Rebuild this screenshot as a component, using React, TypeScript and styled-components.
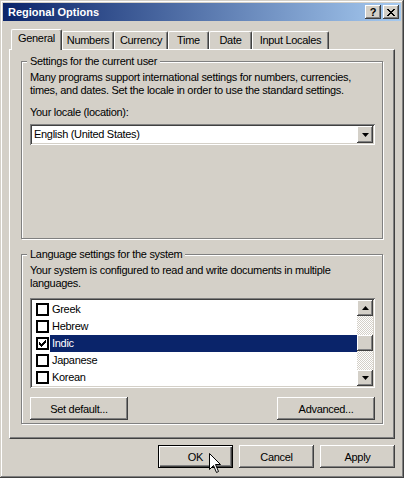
import React from "react";
import styled, { createGlobalStyle, css } from "styled-components";

const Global = createGlobalStyle`
  html, body { margin: 0; padding: 0; background: #d4d0c8; }
  body { font-family: "Liberation Sans", Arial, sans-serif; font-size: 11px; color: #000; letter-spacing: -0.3px; }
  *, *::before, *::after { box-sizing: border-box; }
`;

const raised = css`
  box-shadow: inset -1px -1px #404040, inset 1px 1px #ffffff, inset -2px -2px #808080, inset 2px 2px #d4d0c8;
`;
const sunken = css`
  box-shadow: inset 1px 1px #808080, inset -1px -1px #ffffff, inset 2px 2px #404040, inset -2px -2px #d4d0c8;
`;

const Window = styled.div`
  position: relative;
  width: 404px;
  height: 478px;
  padding: 3px;
  background: #d4d0c8;
  display: flex;
  flex-direction: column;
  box-shadow: inset -1px -1px #404040, inset 1px 1px #d4d0c8, inset -2px -2px #808080, inset 2px 2px #ffffff;
`;

const TitleBar = styled.div`
  flex: none;
  height: 18px;
  display: flex;
  align-items: center;
  padding: 0 2px 0 5px;
  background: linear-gradient(to right, #0a246a, #a6caf0);
`;

const TitleText = styled.div`
  flex: 1;
  color: #fff;
  font-weight: bold;
  font-size: 11px;
  line-height: 18px;
  letter-spacing: 0;
  white-space: nowrap;
`;

const CaptionButtons = styled.div`
  display: flex;
  gap: 2px;
`;

const CaptionButton = styled.div`
  width: 16px;
  height: 14px;
  background: #d4d0c8;
  ${raised}
  display: flex;
  align-items: center;
  justify-content: center;
  font-weight: bold;
  font-size: 11px;
  line-height: 14px;
  letter-spacing: 0;
  color: #000;
`;

const Body = styled.div`
  flex: 1;
  display: flex;
  flex-direction: column;
  padding: 8px 6px 7px;
`;

const TabStrip = styled.div`
  flex: none;
  height: 20px;
  display: flex;
  align-items: flex-end;
  padding-left: 2px;
`;

const Tab = styled.div<{ $w: number; $active?: boolean }>`
  position: relative;
  z-index: ${(p) => (p.$active ? 1 : 0)};
  flex: none;
  width: ${(p) => p.$w}px;
  height: ${(p) => (p.$active ? 21 : 18)}px;
  margin-bottom: ${(p) => (p.$active ? -1 : 0)}px;
  padding-top: 2px;
  background: #d4d0c8;
  border-top: 1px solid #fff;
  border-left: 1px solid #fff;
  border-right: 1px solid #404040;
  border-radius: 2px 2px 0 0;
  box-shadow: inset -1px 0 #808080;
  text-align: center;
  line-height: 13px;
  white-space: nowrap;
`;

const Panel = styled.div`
  flex: 1;
  display: flex;
  flex-direction: column;
  gap: 15px;
  padding: 11px 11px 0;
  background: #d4d0c8;
  border-top: 1px solid #fff;
  border-left: 1px solid #fff;
  border-right: 1px solid #404040;
  border-bottom: 1px solid #404040;
  box-shadow: inset -1px -1px #808080;
`;

const GroupBox = styled.div<{ $h: number }>`
  flex: none;
  height: ${(p) => p.$h}px;
  display: flex;
  flex-direction: column;
  padding: 0 7px 0 8px;
  border: 1px solid #808080;
  box-shadow: 1px 1px 0 #fff, inset 1px 1px 0 #fff;
`;

const GroupTitle = styled.div`
  align-self: flex-start;
  margin: -7px 0 0 -3px;
  padding: 0 3px;
  background: #d4d0c8;
  line-height: 13px;
  white-space: nowrap;
`;

const Text = styled.div<{ $mt: number }>`
  margin-top: ${(p) => p.$mt}px;
  line-height: 13px;
`;

const Combo = styled.div<{ $mt: number }>`
  margin-top: ${(p) => p.$mt}px;
  height: 21px;
  padding: 2px;
  display: flex;
  background: #fff;
  ${sunken}
`;

const ComboText = styled.div`
  flex: 1;
  padding-left: 2px;
  line-height: 17px;
`;

const ArrowButton = styled.div`
  flex: none;
  width: 16px;
  height: 16px;
  background: #d4d0c8;
  ${raised}
  display: flex;
  align-items: center;
  justify-content: center;
`;

const ComboButton = styled(ArrowButton)`
  height: 17px;
`;

const ListBox = styled.div<{ $mt: number }>`
  margin-top: ${(p) => p.$mt}px;
  height: 90px;
  padding: 2px;
  display: flex;
  background: #fff;
  ${sunken}
`;

const ListRows = styled.div`
  flex: 1;
  padding-top: 1px;
  display: flex;
  flex-direction: column;
  overflow: hidden;
`;

const Row = styled.div`
  flex: none;
  height: 17px;
  display: flex;
  align-items: center;
  padding-left: 4px;
`;

const CheckBox = styled.div`
  flex: none;
  width: 13px;
  height: 13px;
  border: 2px solid #000;
  background: #fff;
  display: flex;
  align-items: center;
  justify-content: center;
`;

const RowLabel = styled.div<{ $selected?: boolean }>`
  flex: 1;
  align-self: stretch;
  margin-left: 1px;
  padding-left: 2px;
  line-height: 17px;
  background: ${(p) => (p.$selected ? "#0a246a" : "transparent")};
  color: ${(p) => (p.$selected ? "#fff" : "#000")};
`;

const ScrollBar = styled.div`
  flex: none;
  width: 16px;
  display: flex;
  flex-direction: column;
  background: repeating-conic-gradient(#d4d0c8 0 25%, #ffffff 0 50%) 0 0 / 2px 2px;
`;

const Track = styled.div`
  flex: 1;
  display: flex;
  flex-direction: column;
`;

const Thumb = styled.div<{ $top: number }>`
  margin-top: ${(p) => p.$top}px;
  height: 16px;
  background: #d4d0c8;
  ${raised}
`;

const ButtonRow = styled.div<{ $mt: number }>`
  margin-top: ${(p) => p.$mt}px;
  display: flex;
  justify-content: space-between;
`;

const Footer = styled.div`
  flex: none;
  margin-top: 6px;
  display: flex;
  justify-content: flex-end;
  gap: 6px;
`;

const Button = styled.button<{ $w: number; $default?: boolean }>`
  width: ${(p) => p.$w}px;
  height: 23px;
  margin: 0;
  padding: 0;
  border: ${(p) => (p.$default ? "1px solid #000" : "none")};
  background: #d4d0c8;
  font: inherit;
  letter-spacing: inherit;
  color: #000;
  display: flex;
  align-items: center;
  justify-content: center;
  ${(p) =>
    p.$default
      ? css`box-shadow: inset 1px 1px #ffffff, inset -1px -1px #404040, inset -2px -2px #808080;`
      : raised}
`;

const Cursor = styled.svg`
  position: absolute;
  left: 209px;
  top: 453px;
`;

const DownArrow = () => (
  <svg width="7" height="4" viewBox="0 0 7 4">
    <path d="M0 0h7L3.5 4z" fill="#000" />
  </svg>
);
const UpArrow = () => (
  <svg width="7" height="4" viewBox="0 0 7 4">
    <path d="M0 4h7L3.5 0z" fill="#000" />
  </svg>
);

const CheckMark = () => (
  <svg width="7" height="7" viewBox="0 0 7 7" shapeRendering="crispEdges">
    <path
      d="M6 0h1v3h-1v1h-1v1h-1v1h-1v1h-1v-1h-1v-1h-1v-3h1v1h1v1h1v-1h1v-1h1v-1h1z"
      fill="#000"
    />
  </svg>
);

const langs = ["Greek", "Hebrew", "Indic", "Japanese", "Korean"];

export default function App() {
  return (
    <>
      <Global />
      <Window>
        <TitleBar>
          <TitleText>Regional Options</TitleText>
          <CaptionButtons>
            <CaptionButton>?</CaptionButton>
            <CaptionButton>
              <svg width="8" height="7" viewBox="0 0 8 7" shapeRendering="crispEdges">
                <path
                  d="M0 0h2v1h1v1h2v-1h1v-1h2v1h-1v1h-1v1h-1v1h1v1h1v1h1v1h-2v-1h-1v-1h-2v1h-1v1h-2v-1h1v-1h1v-1h1v-1h-1v-1h-1v-1h-1z"
                  fill="#000"
                />
              </svg>
            </CaptionButton>
          </CaptionButtons>
        </TitleBar>
        <Body>
          <TabStrip>
            <Tab $w={51} $active>General</Tab>
            <Tab $w={52}>Numbers</Tab>
            <Tab $w={54}>Currency</Tab>
            <Tab $w={41}>Time</Tab>
            <Tab $w={43}>Date</Tab>
            <Tab $w={77}>Input Locales</Tab>
          </TabStrip>
          <Panel>
            <GroupBox $h={178}>
              <GroupTitle>Settings for the current user</GroupTitle>
              <Text $mt={3}>
                Many programs support international settings for numbers, currencies,
                <br />
                times, and dates. Set the locale in order to use the standard settings.
              </Text>
              <Text $mt={9}>Your locale (location):</Text>
              <Combo $mt={5}>
                <ComboText>English (United States)</ComboText>
                <ComboButton>
                  <DownArrow />
                </ComboButton>
              </Combo>
            </GroupBox>
            <GroupBox $h={170}>
              <GroupTitle>Language settings for the system</GroupTitle>
              <Text $mt={3}>
                Your system is configured to read and write documents in multiple
                <br />
                languages.
              </Text>
              <ListBox $mt={8}>
                <ListRows>
                  {langs.map((l) => (
                    <Row key={l}>
                      <CheckBox>{l === "Indic" && <CheckMark />}</CheckBox>
                      <RowLabel $selected={l === "Indic"}>{l}</RowLabel>
                    </Row>
                  ))}
                </ListRows>
                <ScrollBar>
                  <ArrowButton>
                    <UpArrow />
                  </ArrowButton>
                  <Track>
                    <Thumb $top={19} />
                  </Track>
                  <ArrowButton>
                    <DownArrow />
                  </ArrowButton>
                </ScrollBar>
              </ListBox>
              <ButtonRow $mt={9}>
                <Button $w={98}>Set default...</Button>
                <Button $w={98}>Advanced...</Button>
              </ButtonRow>
            </GroupBox>
          </Panel>
          <Footer>
            <Button $w={75} $default>
              OK
            </Button>
            <Button $w={75}>Cancel</Button>
            <Button $w={75}>Apply</Button>
          </Footer>
        </Body>
        <Cursor width="13" height="21" viewBox="0 0 13 21">
          <path
            d="M0.5 0.5V16.5L4.5 12.5L7.5 19.5L9.5 18.5L6.5 11.5H11.5Z"
            fill="#fff"
            stroke="#000"
            strokeWidth="1"
          />
        </Cursor>
      </Window>
    </>
  );
}
